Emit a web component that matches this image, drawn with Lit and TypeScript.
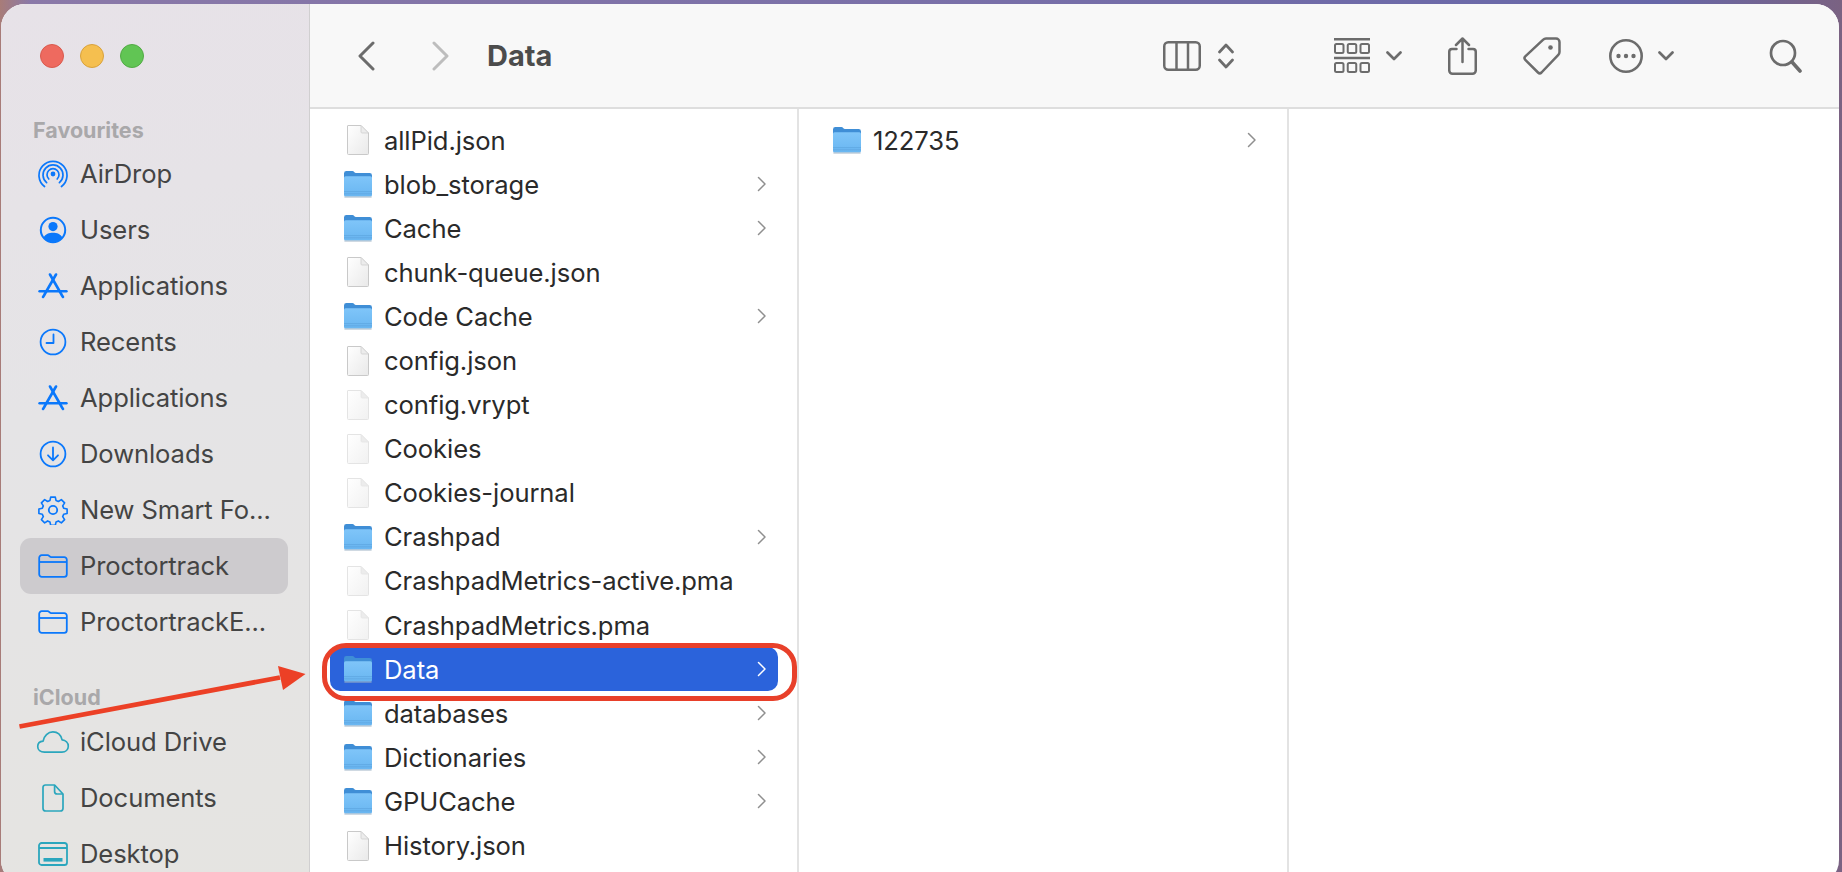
import { LitElement, html, css, svg } from "lit";
import { customElement } from "lit/decorators.js";

const BLUE = "#0b78fb";
const TEAL = "#2ba6bd";

const sideIcon = (w: number, h: number, vb: string, body: unknown) =>
  html`<svg class="sicon" width=${w} height=${h} viewBox=${vb} fill="none">${body}</svg>`;

const S = `stroke-linecap:round;stroke-linejoin:round`;

const icons: Record<string, unknown> = {
  airdrop: sideIcon(30, 30, "0 0 30 30", svg`<g stroke=${BLUE} stroke-width="1.7" style=${S}>
    <path d="M6.5 27.5A14 14 0 1 1 23.5 27.5"/><path d="M8.6 23.6A10 10 0 1 1 21.4 23.6"/><path d="M10.8 20A6 6 0 1 1 19.2 20"/></g>
    <circle cx="15" cy="15" r="2.4" fill=${BLUE}/>`),
  users: sideIcon(28, 28, "0 0 28 28", svg`<circle cx="14" cy="14" r="12.2" stroke=${BLUE} stroke-width="2"/>
    <circle cx="14" cy="10.6" r="4.6" fill=${BLUE}/>
    <path d="M4.6 21.5C6.5 18 10 16.8 14 16.8S21.5 18 23.4 21.5A12 12 0 0 1 14 26 12 12 0 0 1 4.6 21.5Z" fill=${BLUE}/>`),
  apps: sideIcon(30, 26, "0 0 30 26", svg`<g stroke=${BLUE} stroke-width="2.6" stroke-linecap="round">
    <path d="M12 1.5 23.5 21.5"/><path d="M18 1.5 6.5 21.5"/><path d="M1.5 18.2H28.5" stroke-width="2.4"/>
    <path d="M5 24l1-1.5"/><path d="M25 24l-1-1.5"/></g>`),
  recents: sideIcon(28, 28, "0 0 28 28", svg`<circle cx="14" cy="14" r="12.4" stroke=${BLUE} stroke-width="1.8"/>
    <path d="M14.5 6.5V15H7.5" stroke=${BLUE} stroke-width="1.8" stroke-linecap="round" stroke-linejoin="round"/>`),
  downloads: sideIcon(28, 28, "0 0 28 28", svg`<circle cx="14" cy="14" r="12.4" stroke=${BLUE} stroke-width="1.8"/>
    <path d="M14 7.5V20M9 15.3 14 20.3 19 15.3" stroke=${BLUE} stroke-width="1.8" stroke-linecap="round" stroke-linejoin="round"/>`),
  gear: sideIcon(30, 30, "0 0 30 30", svg`<path d="M12.6 1.6h4.8l.8 3.6 2.4 1 3.1-2 3.4 3.4-2 3.1 1 2.4 3.6.8v4.8l-3.6.8-1 2.4 2 3.1-3.4 3.4-3.1-2-2.4 1-.8 3.6h-4.8l-.8-3.6-2.4-1-3.1 2-3.4-3.4 2-3.1-1-2.4-3.6-.8v-4.8l3.6-.8 1-2.4-2-3.1 3.4-3.4 3.1 2 2.4-1Z" stroke=${BLUE} stroke-width="1.7" stroke-linejoin="round" transform="translate(15 15) scale(.96) translate(-15 -15)"/>
    <circle cx="15" cy="15" r="4.2" stroke=${BLUE} stroke-width="1.8"/>`),
  folder: sideIcon(30, 24, "0 0 30 24", svg`<path d="M1.2 4A2.6 2.6 0 0 1 3.8 1.2H9.6c1.6 0 2 1.9 3.6 1.9H26.2A2.6 2.6 0 0 1 28.8 5.7V20.2A2.6 2.6 0 0 1 26.2 22.8H3.8A2.6 2.6 0 0 1 1.2 20.2Z" stroke=${BLUE} stroke-width="1.8"/>
    <path d="M1.2 8H28.8" stroke=${BLUE} stroke-width="1.8"/>`),
  cloud: sideIcon(33, 23, "0 0 33 23", svg`<path d="M8 21.6C4 21.6 1.2 19.2 1.2 16S3.4 10.8 6.6 10.6C7.4 5.6 11.6 1.4 16.4 1.4 21 1.4 24.4 4.4 25.6 9.4 29 9.8 31.8 12.4 31.8 15.8 31.8 19.2 29 21.6 25.4 21.6Z" stroke=${TEAL} stroke-width="1.7" stroke-linejoin="round"/>`),
  doc: sideIcon(22, 28, "0 0 22 28", svg`<path d="M3.4 1H12.6L21 10V24.2A2.8 2.8 0 0 1 18.2 27H3.8A2.8 2.8 0 0 1 1 24.2V3.4A2.4 2.4 0 0 1 3.4 1Z" stroke=${TEAL} stroke-width="1.7" stroke-linejoin="round"/>
    <path d="M12.6 1V7.4A2.6 2.6 0 0 0 15.2 10H21" stroke=${TEAL} stroke-width="1.7" stroke-linejoin="round"/>`),
  desktop: sideIcon(30, 24, "0 0 30 24", svg`<rect x="1" y="1" width="28" height="22" rx="2.6" stroke=${TEAL} stroke-width="1.8"/>
    <path d="M1 6H29" stroke=${TEAL} stroke-width="1.8"/><rect x="5.5" y="16" width="19" height="3.6" fill=${TEAL}/>`),
};

const sideTop = [
  ["airdrop", "AirDrop"], ["users", "Users"], ["apps", "Applications"], ["recents", "Recents"],
  ["apps", "Applications"], ["downloads", "Downloads"], ["gear", "New Smart Fo..."],
  ["folder", "Proctortrack"], ["folder", "ProctortrackE..."],
];
const sideCloud = [["cloud", "iCloud Drive"], ["doc", "Documents"], ["desktop", "Desktop"]];

type Kind = "json" | "file" | "dir";
const files: [Kind, string][] = [
  ["json", "allPid.json"], ["dir", "blob_storage"], ["dir", "Cache"], ["json", "chunk-queue.json"],
  ["dir", "Code Cache"], ["json", "config.json"], ["file", "config.vrypt"], ["file", "Cookies"],
  ["file", "Cookies-journal"], ["dir", "Crashpad"], ["file", "CrashpadMetrics-active.pma"],
  ["file", "CrashpadMetrics.pma"], ["dir", "Data"], ["dir", "databases"], ["dir", "Dictionaries"],
  ["dir", "GPUCache"], ["json", "History.json"],
];

const folderIcon = (id: string) => html`<svg class="ficon" width="30" height="28" viewBox="0 0 30 28">
  <defs><linearGradient id=${id} x1="0" y1="0" x2="0" y2="1"><stop offset="0" stop-color="#7fc5f9"/><stop offset="1" stop-color="#69b6f1"/></linearGradient></defs>
  <path d="M1 3.4A2.4 2.4 0 0 1 3.4 1H9.4C11 1 11.4 3 13 3H26.6A2.4 2.4 0 0 1 29 5.4V10H1Z" fill="#3f8ed6"/>
  <rect x="1" y="6.2" width="28" height="20.3" rx="1.6" fill="url(#${id})"/>
  <path d="M1 21.6H29M1 23.8H29" stroke="#5da6df" stroke-width=".8"/>
  <path d="M1.4 27H28.6" stroke="#9fb4c6" stroke-width="1"/>
</svg>`;

const fileIcon = (strong: boolean, id: string) => html`<svg class="ficon" width="30" height="32" viewBox="0 0 30 32">
  <defs><linearGradient id=${id} x1="0" y1="0" x2="1" y2="1"><stop offset="0" stop-color="#ffffff"/><stop offset="1" stop-color=${strong ? "#e9e9e9" : "#f1f1f1"}/></linearGradient></defs>
  <path d="M5 1.5H18L25.5 9V29.5A1 1 0 0 1 24.5 30.5H5.5A1 1 0 0 1 4.500 29.500V2A.5 .5 0 0 1 5 1.500Z" fill="url(#${id})" stroke=${strong ? "#c9c9c9" : "#e4e4e4"} stroke-width="1"/>
  <path d="M18 1.500V8A1 1 0 0 0 19 9H25.500Z" fill="#ececec" stroke=${strong ? "#cfcfcf" : "#e4e4e4"} stroke-width=".8"/>
</svg>`;

const chevron = html`<svg class="chev" width="10" height="16" viewBox="0 0 10 16" fill="none"><path d="M1.500 1.500 8 8 1.500 14.500" stroke="currentColor" stroke-width="1.500" stroke-linecap="round" stroke-linejoin="round"/></svg>`;

const downChev = html`<svg width="16" height="10" viewBox="0 0 16 10" fill="none"><path d="M1.500 1.500 8 8 14.500 1.500" stroke="#6c6c6c" stroke-width="2.700" stroke-linecap="round" stroke-linejoin="round"/></svg>`;

@customElement("app-root")
export class AppRoot extends LitElement {
  static styles = css`
    :host {
      display: block; width: 1842px; height: 872px; overflow: hidden; position: relative;
      font-family: Inter, "Liberation Sans", sans-serif;
      background:
        linear-gradient(90deg, rgba(168,124,120,1) 0, rgba(168,124,120,0) 30px),
        linear-gradient(90deg, #8b79a8 0%, #7a70a8 50%, #6767a8 90%, #7a6282 100%);
    }
    .window {
      width: 1838px; height: 880px; margin: 4px 0 0 1px; border-radius: 24px; overflow: hidden;
      display: flex; background: #fff; box-shadow: inset 0 1px 0 rgba(255,255,255,.6);
    }
    .sidebar {
      width: 309px; flex: none; box-sizing: border-box; padding: 40px 21px 0 19px;
      background: linear-gradient(170deg, #e7e2e8 0%, #e5e4e6 45%, #e5e4e1 100%);
      border-right: 1px solid #d0cfd0; display: flex; flex-direction: column; overflow: hidden;
    }
    .sidebar > * { flex: none; }
    .lights { display: flex; gap: 16px; padding-left: 20px; height: 26px; align-items: flex-start; }
    .light { width: 24px; height: 24px; border-radius: 50%; box-sizing: border-box; border: 1px solid; }
    .r { background: #ee6a5f; border-color: #d95a4e; }
    .y { background: #f5bf4f; border-color: #d9a23c; }
    .g { background: #61c554; border-color: #52ab45; }
    .head { font-size: 21.5px; font-weight: 700; color: #a9a8aa; padding-left: 13px; height: 26px; line-height: 26px; }
    .head.fav { margin-top: 46.500px; }
    .head.cloud { margin-top: 34px; }
    .srow {
      height: 56px; display: flex; align-items: center; border-radius: 11px; font-size: 25.6px; color: #444444;
      position: relative; padding-left: 60px; white-space: nowrap; letter-spacing: -.1px;
    }
    .srow.sel { background: #cdcbce; }
    .sicon { position: absolute; left: 33px; top: 50%; transform: translate(-50%, -50%); }
    .srows { margin-top: 3px; }
    .srows.c { margin-top: 4px; }
    .main { flex: 1; min-width: 0; display: flex; flex-direction: column; }
    .toolbar {
      height: 105px; flex: none; box-sizing: border-box; background: #f8f8f8; border-bottom: 2px solid #dedede;
      display: flex; align-items: center; padding: 0 37px 0 47px; color: #6c6c6c;
    }
    .toolbar svg { flex: none; display: block; }
    .nav2 { margin-left: 57px; }
    .title { font-size: 29px; font-weight: 700; color: #4c4c4c; margin-left: 37px; width: 676px; }
    .gap { flex: none; }
    .g1 { width: 17px; } .g2 { width: 100px; } .g3 { width: 16px; } .g4 { width: 46px; }
    .g5 { width: 46px; } .g6 { width: 48px; } .g7 { width: 15px; } .g8 { flex: 1; }
    .cols { flex: 1; display: flex; min-height: 0; }
    .col { box-sizing: border-box; padding-top: 9px; flex: none; }
    .c1 { width: 489px; border-right: 2px solid #e3e3e3; padding-left: 20px; padding-right: 19px; }
    .c2 { width: 490px; border-right: 2px solid #e3e3e3; padding-left: 20px; padding-right: 19px; }
    .row {
      height: 44.1px; display: flex; align-items: center; border-radius: 10px; position: relative;
      font-size: 25.6px; color: #2a2a2a; padding-left: 54px; white-space: nowrap; letter-spacing: -.1px;
    }
    .row.sel { background: #2b63db; color: #fff; }
    .ficon { position: absolute; left: 28px; top: 50%; transform: translate(-50%, -50%); }
    .chev { position: absolute; right: 11px; top: 50%; transform: translateY(-50%); color: #8f8f8f; }
    .row.sel .chev { color: #fff; }
    .ring {
      position: absolute; left: 322px; top: 643px; width: 475px; height: 58px; box-sizing: border-box;
      border: 5px solid #e8402a; border-radius: 24px; pointer-events: none;
    }
    .arrow { position: absolute; left: 0; top: 640px; pointer-events: none; }
  `;

  render() {
    return html`
      <div class="window">
        <aside class="sidebar">
          <div class="lights"><span class="light r"></span><span class="light y"></span><span class="light g"></span></div>
          <div class="head fav">Favourites</div>
          <div class="srows">
            ${sideTop.map(([i, t]) => html`<div class="srow ${t === "Proctortrack" ? "sel" : ""}">${icons[i]}${t}</div>`)}
          </div>
          <div class="head cloud">iCloud</div>
          <div class="srows c">
            ${sideCloud.map(([i, t]) => html`<div class="srow">${icons[i]}${t}</div>`)}
          </div>
        </aside>
        <main class="main">
          <header class="toolbar">
            <svg width="18" height="30" viewBox="0 0 18 30" fill="none"><path d="M16 2 3 15 16 28" stroke="#6c6c6c" stroke-width="3" stroke-linecap="round" stroke-linejoin="round"/></svg>
            <svg class="nav2" width="18" height="30" viewBox="0 0 18 30" fill="none"><path d="M2 2 15 15 2 28" stroke="#bdbdbd" stroke-width="3" stroke-linecap="round" stroke-linejoin="round"/></svg>
            <div class="title">Data</div>
            <svg width="38" height="30" viewBox="0 0 38 30" fill="none"><rect x="1.250" y="1.250" width="35.500" height="27.500" rx="4" stroke="#6c6c6c" stroke-width="2.500"/><path d="M13.500 1.500V28.500M25 1.500V28.500" stroke="#6c6c6c" stroke-width="2.500"/></svg>
            <span class="gap g1"></span>
            <svg width="16" height="26" viewBox="0 0 16 26" fill="none"><path d="M1.500 9 8 2 14.500 9M1.500 17 8 24 14.500 17" stroke="#6c6c6c" stroke-width="2.700" stroke-linecap="round" stroke-linejoin="round"/></svg>
            <span class="gap g2"></span>
            <svg width="36" height="35" viewBox="0 0 36 35" fill="none" stroke="#6c6c6c"><path d="M0 1.200H36M0 20H36" stroke-width="2.400"/><g stroke-width="2"><rect x="1" y="6" width="8.500" height="9" rx="1.500"/><rect x="13.750" y="6" width="8.500" height="9" rx="1.500"/><rect x="26.500" y="6" width="8.500" height="9" rx="1.500"/><rect x="1" y="25" width="8.500" height="9" rx="1.500"/><rect x="13.750" y="25" width="8.500" height="9" rx="1.500"/><rect x="26.500" y="25" width="8.500" height="9" rx="1.500"/></g></svg>
            <span class="gap g3"></span>
            ${downChev}
            <span class="gap g4"></span>
            <svg width="29" height="38" viewBox="0 0 29 38" fill="none" stroke="#6c6c6c" stroke-width="2.500" stroke-linecap="round" stroke-linejoin="round"><path d="M8.500 12H4A2.750 2.750 0 0 0 1.250 14.750V33.500A3.250 3.250 0 0 0 4.500 36.750H24.500A3.250 3.250 0 0 0 27.750 33.500V14.750A2.750 2.750 0 0 0 25 12H20.500"/><path d="M14.500 25V1.800M8 8 14.500 1.500 21 8"/></svg>
            <span class="gap g5"></span>
            <svg width="38" height="38" viewBox="0 0 38 38" fill="none"><path d="M23 1.500H33A3.500 3.500 0 0 1 36.500 5V15A4 4 0 0 1 35.300 17.800L18.500 35.500A2.500 2.500 0 0 1 15 35.500L2.300 22.800A2.500 2.500 0 0 1 2.300 19.300L20.200 2.700A4 4 0 0 1 23 1.500Z" stroke="#6c6c6c" stroke-width="2.500" stroke-linejoin="round"/><circle cx="27.500" cy="10.500" r="2.300" fill="#6c6c6c"/></svg>
            <span class="gap g6"></span>
            <svg width="34" height="34" viewBox="0 0 34 34" fill="none"><circle cx="17" cy="17" r="15.700" stroke="#6c6c6c" stroke-width="2.600"/><circle cx="9.500" cy="17" r="2.200" fill="#6c6c6c"/><circle cx="17" cy="17" r="2.200" fill="#6c6c6c"/><circle cx="24.500" cy="17" r="2.200" fill="#6c6c6c"/></svg>
            <span class="gap g7"></span>
            ${downChev}
            <span class="gap g8"></span>
            <svg width="33" height="34" viewBox="0 0 33 34" fill="none" stroke="#6c6c6c" stroke-linecap="round"><circle cx="14" cy="14" r="12" stroke-width="2.700"/><path d="M23 23 31 32" stroke-width="3.600"/></svg>
          </header>
          <div class="cols">
            <section class="col c1">
              ${files.map(([k, n], i) => html`<div class="row ${n === "Data" ? "sel" : ""}">
                ${k === "dir" ? folderIcon(`d${i}`) : fileIcon(k === "json", `f${i}`)}${n}${k === "dir" ? chevron : ""}
              </div>`)}
            </section>
            <section class="col c2">
              <div class="row">${folderIcon("x0")}122735${chevron}</div>
            </section>
          </div>
        </main>
      </div>
      <div class="ring"></div>
      <svg class="arrow" width="320" height="100" viewBox="0 640 320 100"><path d="M19.500 726.500 280 677.500" stroke="#ec4026" stroke-width="4.800"/><path d="M278 666 305.500 674 283 690Z" fill="#ec4026"/></svg>
    `;
  }
}
